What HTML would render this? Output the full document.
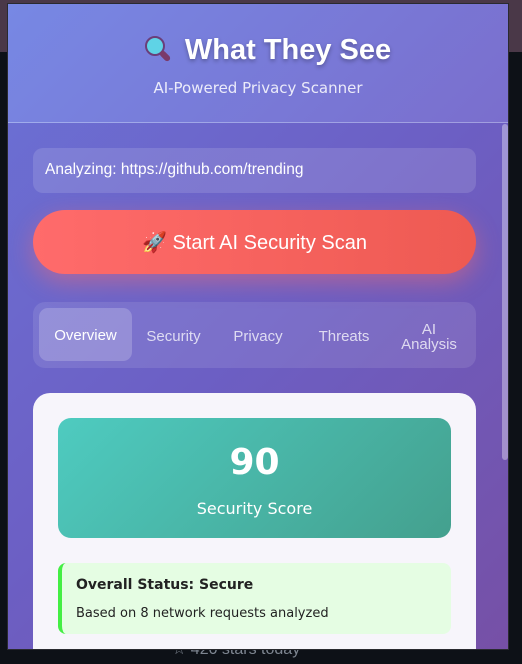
<!DOCTYPE html>
<html><head><style>
*{box-sizing:border-box;margin:0;padding:0}
body{width:522px;height:664px;overflow:hidden;background:#0d1117;font-family:"Liberation Sans","DejaVu Sans",sans-serif;position:relative}
.topband{position:absolute;left:0;top:0;width:522px;height:52px;background:#4a3848}
.under{position:absolute;left:172px;top:639px;color:#7d8590;font-size:16px}
.pop{position:absolute;left:7px;top:3px;width:502px;height:647px;border:1px solid #2a2a30;overflow:hidden;background:linear-gradient(135deg,#6b72d6 0%,#6c5fc4 50%,#7650a6 100%)}
.hdr{position:absolute;left:0;top:0;width:500px;height:119px;background:linear-gradient(135deg,#7788e4,#7a6ecd);border-bottom:1px solid rgba(255,255,255,.3);text-align:center;color:#fff}
.hdr h1{position:absolute;top:29px;width:100%;font-family:"Liberation Sans",sans-serif;font-size:29px;font-weight:bold;text-shadow:0 2px 4px rgba(0,0,0,.3);padding-left:18px}
.hdr p{position:absolute;top:75px;width:100%;font-family:"DejaVu Sans",sans-serif;font-size:15px;color:rgba(255,255,255,.85)}
.mag{display:inline-block;position:relative;width:30px;height:28px;vertical-align:-2px;margin-right:12px}
.mag i{position:absolute;left:2px;top:3px;width:20px;height:20px;border-radius:50%;background:#5fd3e6;border:2px solid #6a3e7a}
.mag b{position:absolute;left:19px;top:17px;width:6px;height:12px;background:#7a3a6a;transform:rotate(-45deg);border-radius:3px}
.scroll{position:absolute;left:494px;top:120px;width:6px;height:336px;background:rgba(255,255,255,.35);border-radius:3px}
.url{position:absolute;left:25px;top:144px;width:443px;height:45px;border-radius:10px;background:rgba(255,255,255,.13);color:#fff;font-size:15.5px;padding:13px 12px}
.btn{position:absolute;left:25px;top:206px;width:443px;height:64px;border-radius:32px;background:linear-gradient(90deg,#ff6b6b,#ee5a52);color:#fff;font-size:20px;text-align:center;line-height:66px;box-shadow:0 8px 24px rgba(255,107,107,.45)}
.tabs{position:absolute;left:25px;top:298px;width:443px;height:66px;border-radius:12px;background:rgba(255,255,255,.1)}
.tab{position:absolute;top:8px;height:53px;color:rgba(255,255,255,.75);font-size:15px;text-align:center;display:flex;align-items:center;justify-content:center;line-height:15px}
.tab.a{top:6px;padding-top:2px;background:rgba(255,255,255,.2);border-radius:9px;color:#fff}
.card{position:absolute;left:25px;top:389px;width:443px;height:300px;border-radius:17px;background:#f7f5fb}
.score{position:absolute;left:25px;top:25px;width:393px;height:120px;border-radius:13px;background:linear-gradient(135deg,#4ecbc0,#44a08e);color:#fff;text-align:center}
.score .n{position:absolute;top:24px;width:100%;font-family:"DejaVu Sans",sans-serif;font-weight:bold;font-size:36px}
.score .l{position:absolute;top:81px;width:100%;font-family:"DejaVu Sans",sans-serif;font-size:16px}
.st{position:absolute;left:25px;top:170px;width:393px;height:71px;border-radius:8px;background:#e5fde3;border-left:4px solid #44ee44;font-family:"DejaVu Sans",sans-serif;color:#222;padding:14px 14px}
.st b{font-size:14px;display:block;margin-bottom:9px}
.st span{font-size:13px}
</style></head><body>
<div class="topband"></div>
<div class="under">☆ 420 stars today</div>
<div class="pop">
<div class="hdr"><h1><span class="mag"><i></i><b></b></span>What They See</h1><p>AI-Powered Privacy Scanner</p></div>
<div class="scroll"></div>
<div class="url">Analyzing: https://github.com/trending</div>
<div class="btn">🚀 Start AI Security Scan</div>
<div class="tabs">
<div class="tab a" style="left:6px;width:93px">Overview</div>
<div class="tab" style="left:102px;width:77px">Security</div>
<div class="tab" style="left:185px;width:80px">Privacy</div>
<div class="tab" style="left:270px;width:82px">Threats</div>
<div class="tab" style="left:355px;width:82px">AI<br>Analysis</div>
</div>
<div class="card">
<div class="score"><div class="n">90</div><div class="l">Security Score</div></div>
<div class="st"><b>Overall Status: Secure</b><span>Based on 8 network requests analyzed</span></div>
</div>
</div>
</body></html>
